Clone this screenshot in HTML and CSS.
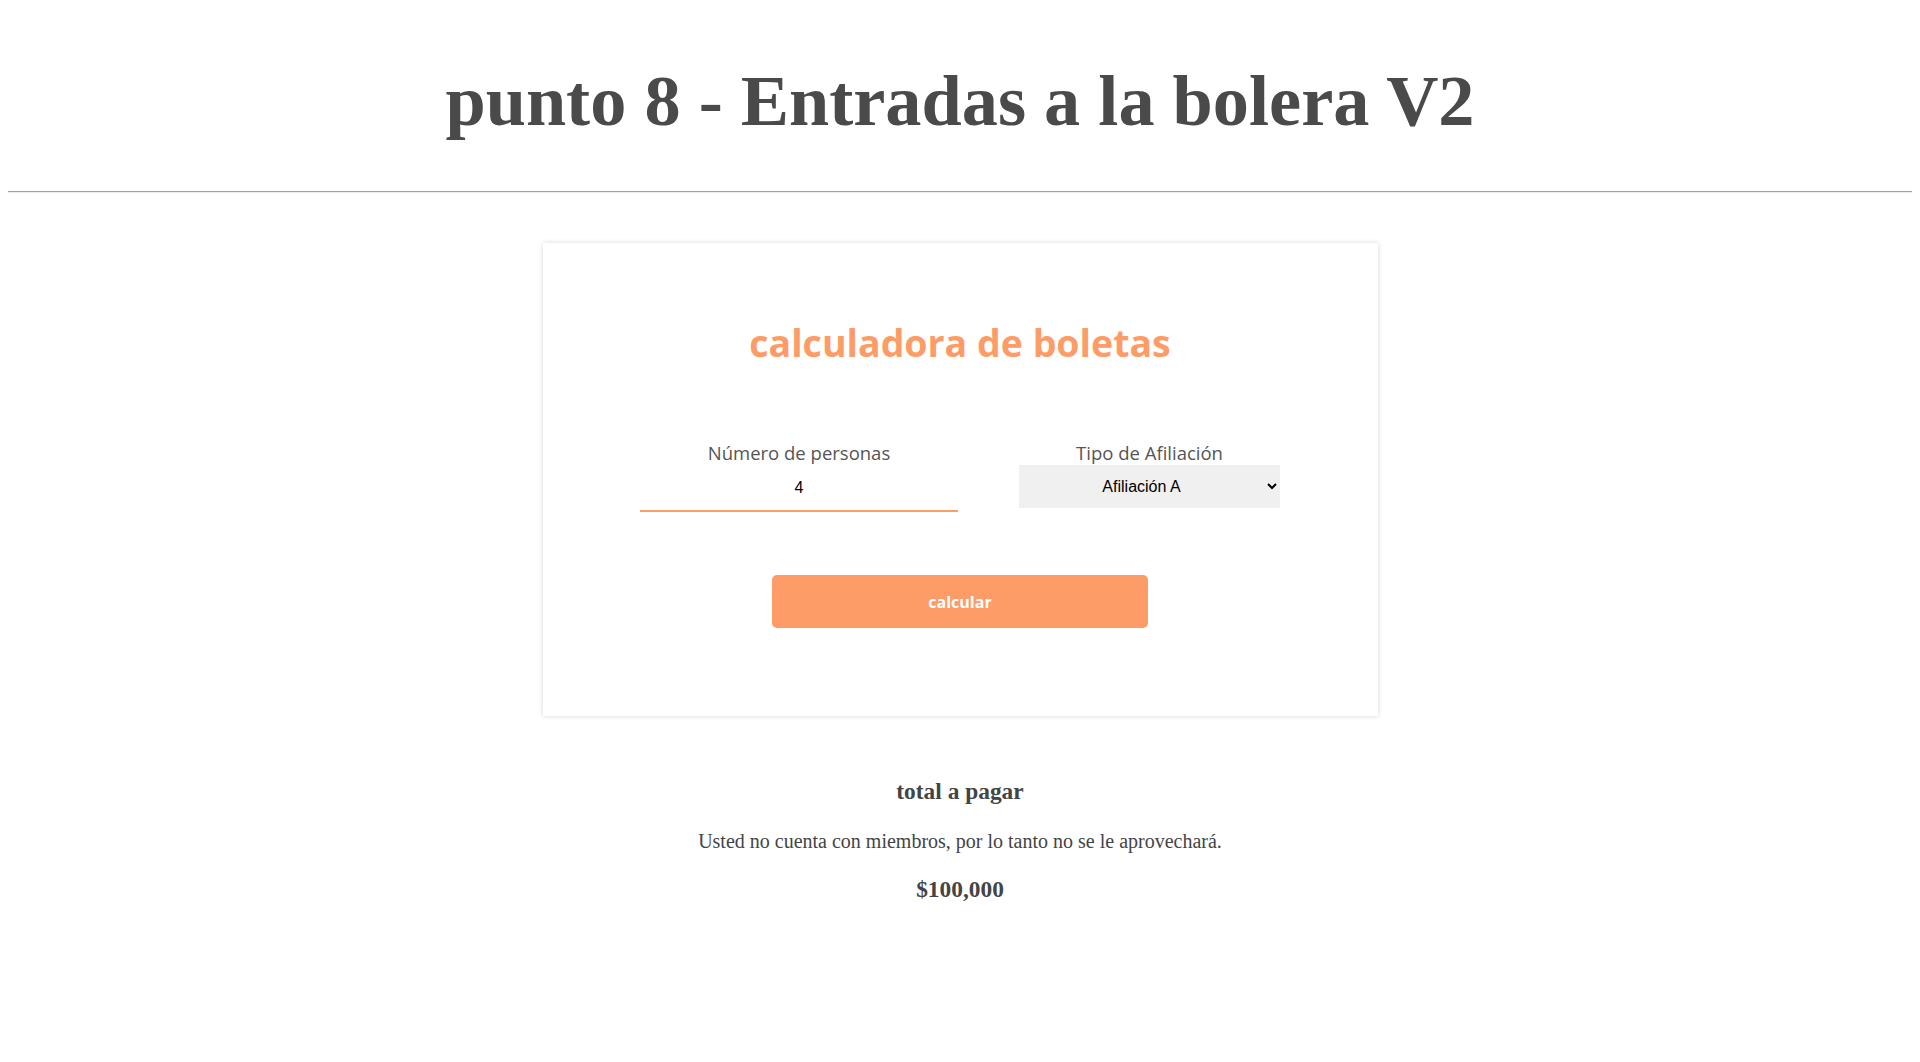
FILE: index.html
```html
<!DOCTYPE html>
<html lang="es">
<head>
<meta charset="utf-8">
<title>punto 8 - Entradas a la bolera V2</title>
<link rel="stylesheet" href="styles.css">
</head>
<body>
  <header class="page-header">
    <h1 class="page-title">punto 8 - Entradas a la bolera V2</h1>
  </header>
  <hr class="divider">
  <main class="content">
    <section class="card">
      <h2 class="card-title">calculadora de boletas</h2>
      <div class="fields">
        <div class="field">
          <label class="field-label" for="personas">Número de personas</label>
          <input id="personas" class="field-input" type="text" value="4">
        </div>
        <div class="field">
          <label class="field-label" for="tipo">Tipo de Afiliación</label>
          <select id="tipo" class="field-select">
            <option>Afiliación A</option>
            <option>Afiliación B</option>
            <option>Afiliación C</option>
          </select>
        </div>
      </div>
      <button class="calc-btn" type="button">calcular</button>
    </section>
    <section class="result">
      <h3 class="result-title">total a pagar</h3>
      <p class="result-msg">Usted no cuenta con miembros, por lo tanto no se le aprovechará.</p>
      <h3 class="result-amount">$100,000</h3>
    </section>
  </main>
</body>
</html>
```
FILE: styles.css
```css
html {
  background: #ffffff;
}

body {
  margin: 0;
  padding: 0 8px;
  font-family: "Liberation Serif", "Times New Roman", serif;
  background: #ffffff;
}

.page-header {
  padding-top: 61px;
}

.page-title {
  margin: 0;
  font-family: "Liberation Serif", "Times New Roman", serif;
  font-size: 72.3px;
  line-height: 80px;
  font-weight: 700;
  color: #4a4a4a;
  text-align: center;
}

.divider {
  margin: 50px 0 0;
  height: 0;
  border: 0;
  border-top: 1px solid #a2a2a2;
  border-bottom: 1px solid #ececec;
}

.content {
  display: flex;
  flex-direction: column;
  align-items: center;
}

.card {
  width: 835px;
  box-sizing: border-box;
  margin-top: 50px;
  padding: 74px 0 88px;
  background: #ffffff;
  box-shadow: 0 0 5px rgba(0, 0, 0, 0.16);
  display: flex;
  flex-direction: column;
  align-items: center;
}

.card-title {
  margin: 0 0 72px;
  font-family: "Open Sans", "Noto Sans", sans-serif;
  font-weight: 700;
  font-size: 37.5px;
  line-height: 52px;
  color: #fd9c67;
  text-align: center;
}

.fields {
  display: flex;
  justify-content: center;
  align-items: flex-start;
  gap: 61px;
}

.field {
  display: flex;
  flex-direction: column;
  align-items: center;
}

.field-label {
  font-family: "Open Sans", "Noto Sans", sans-serif;
  font-weight: 400;
  font-size: 18.5px;
  line-height: 24px;
  color: #555555;
}

.field-input {
  width: 318px;
  height: 47px;
  box-sizing: border-box;
  padding: 0;
  border: 0;
  border-bottom: 2px solid #fd9c67;
  background: transparent;
  outline: none;
  text-align: center;
  font-family: "Liberation Sans", Arial, sans-serif;
  font-size: 16px;
  color: #000000;
}

.field-select {
  width: 261px;
  height: 43px;
  box-sizing: border-box;
  padding: 0 4px 0 0;
  border: 0;
  border-radius: 0;
  background-color: #f0f0f0;
  text-align: center;
  text-align-last: center;
  font-family: "Liberation Sans", Arial, sans-serif;
  font-size: 16px;
  color: #000000;
}

.calc-btn {
  width: 376px;
  height: 53px;
  margin-top: 63px;
  border: 0;
  border-radius: 5px;
  background: #fd9c67;
  color: #ffffff;
  font-family: "Open Sans", "Noto Sans", sans-serif;
  font-weight: 700;
  font-size: 16px;
  cursor: pointer;
}

.result {
  margin-top: 62px;
  text-align: center;
  color: #444444;
}

.result-title {
  margin: 0;
  font-size: 23.4px;
  font-weight: 700;
}

.result-msg {
  margin: 25px 0 0;
  font-size: 20px;
}

.result-amount {
  margin: 23px 0 0;
  font-size: 23.4px;
  font-weight: 700;
}
```
